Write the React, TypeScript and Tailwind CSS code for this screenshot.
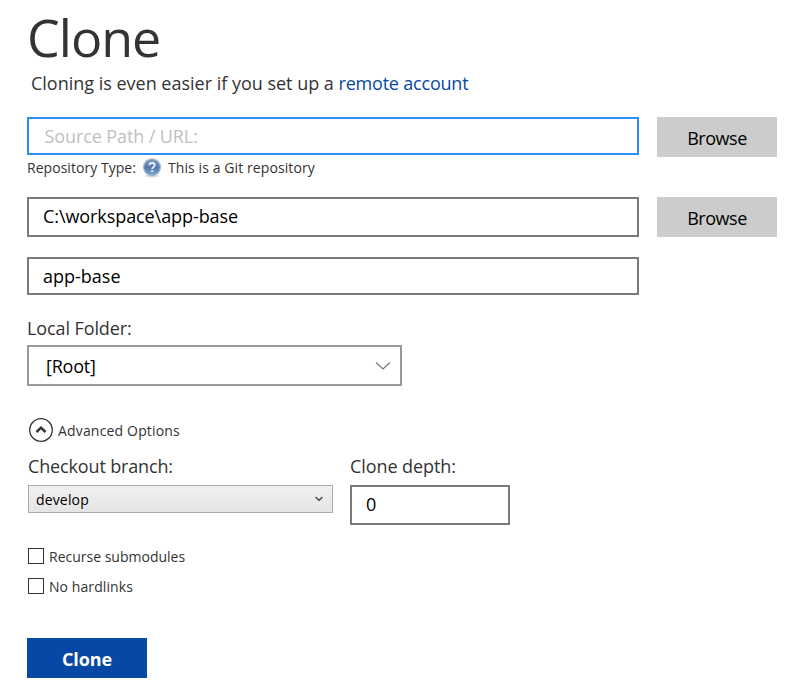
import React from "react";

type FieldProps = { className: string; children: React.ReactNode };

function Field({ className, children }: FieldProps) {
  return (
    <div className={`flex w-[612px] items-center border-2 text-[18px] ${className}`}>
      {children}
    </div>
  );
}

function BrowseButton() {
  return (
    <button className="flex h-10 w-[120px] items-center justify-center bg-[#cccccc] pt-0.5 text-[18px] text-black">
      <span className="tracking-[-0.45px]">Browse</span>
    </button>
  );
}

function HelpIcon() {
  return (
    <svg width="20" height="20" viewBox="0 0 20 20">
      <defs>
        <linearGradient id="ball" x1="0" y1="0" x2="0" y2="1">
          <stop offset="0" stopColor="#86a3c8" />
          <stop offset="0.5" stopColor="#4f78ab" />
          <stop offset="1" stopColor="#7fabd9" />
        </linearGradient>
      </defs>
      <ellipse cx="10" cy="18" rx="7" ry="1.4" fill="#d9d9d9" />
      <circle cx="10" cy="9.2" r="8.400" fill="url(#ball)" stroke="#a9b6c8" strokeWidth="1.200" />
      <path d="M7.400 7.3C7.500 5.700 8.500 5 10 5c1.600 0 2.700.9 2.700 2.200 0 1.900-2.500 2-2.500 3.900" fill="none" stroke="#eef3f9" strokeWidth="1.800" />
      <rect x="9.200" y="12.200" width="2" height="1.900" fill="#eef3f9" />
    </svg>
  );
}

function CheckRow({ children }: { children: React.ReactNode }) {
  return (
    <label className="ml-px flex h-4 items-center">
      <span className="h-4 w-4 border border-[#333333] bg-white" />
      <span className="ml-[5px] mt-px text-[14px] leading-5">{children}</span>
    </label>
  );
}

export default function App() {
  return (
    <main className="h-[691px] w-[786px] overflow-hidden bg-white pl-[27px] pt-[7px] font-['Open_Sans','Noto_Sans',sans-serif] text-[#333333]">
      <h1 className="h-[60px] text-[52px] leading-[60px]">
        <span className="tracking-[-1px]">Clone</span>
      </h1>
      <p className="ml-1 mt-1 h-6 whitespace-nowrap text-[18px] leading-6">
        <span className="tracking-[-0.01px]">Cloning is even easier if you set up a </span>
        <a className="tracking-[-0.2px] text-[#0747a6]">remote account</a>
      </p>

      <div className="mt-[22px] flex h-[38px] gap-[18px]">
        <Field className="h-[38px] border-[#2a8ff7] pl-[15.500px] text-[#bfbfbf]">
          <span className="tracking-[-0.1px]">Source Path / URL:</span>
        </Field>
        <BrowseButton />
      </div>
      <div className="mt-[3px] flex h-5 items-center text-[14px] leading-5">
        <span className="w-[109px] tracking-[0.04px]">Repository Type:</span>
        <span className="ml-[6px]"><HelpIcon /></span>
        <span className="ml-[6px] tracking-[0.09px]">This is a Git repository</span>
      </div>

      <div className="mt-[19px] flex h-10 gap-[18px]">
        <Field className="h-10 border-[#7a7a7a] pb-0.5 pl-[14px] text-black">
          <span className="tracking-[-0.08px]">C:\workspace\app-base</span>
        </Field>
        <BrowseButton />
      </div>
      <div className="mt-5">
        <Field className="h-[38px] border-[#7a7a7a] pl-[14px] text-black">
          <span>app-base</span>
        </Field>
      </div>

      <div className="mt-[21px] h-6 text-[18px] leading-6">
        <span className="tracking-[-0.1px]">Local Folder:</span>
      </div>
      <div className="mt-[5px] flex h-[41px] w-[375px] items-center justify-between border-2 border-[#999999] pl-[17px] pr-[9px] text-[18px] text-black">
        <span className="pt-px tracking-[-0.2px]">[Root]</span>
        <svg width="16" height="10" viewBox="0 0 16 10">
          <path d="M1 1.500 8 8 15 1.500" fill="none" stroke="#777777" strokeWidth="1.200" />
        </svg>
      </div>

      <div className="ml-0.5 mt-8 flex h-6 items-center">
        <svg width="24" height="24" viewBox="0 0 24 24">
          <circle cx="12" cy="12" r="11.300" fill="none" stroke="#333333" strokeWidth="1.300" />
          <path d="M7.500 14 12 9.700 16.500 14" fill="none" stroke="#333333" strokeWidth="2.500" />
        </svg>
        <span className="ml-[5px] mt-px text-[14px] leading-5 tracking-[0.17px]">Advanced Options</span>
      </div>

      <div className="ml-px mt-3 flex gap-[17px]">
        <div className="w-[305px]">
          <div className="h-6 text-[18px] leading-6">
            <span className="tracking-[-0.15px]">Checkout branch:</span>
          </div>
          <div className="mt-[7px] flex h-7 items-center justify-between border border-[#acacac] bg-linear-to-b from-[#f0f0f0] to-[#e5e5e5] pl-[7px] pr-[9px] text-[14px] text-black">
            <span className="tracking-[0.15px]">develop</span>
            <svg width="8" height="6" viewBox="0 0 8 6">
              <path d="M0.600 1 4 4.400 7.400 1" fill="none" stroke="#555555" strokeWidth="1.600" />
            </svg>
          </div>
        </div>
        <div className="w-40">
          <div className="h-6 text-[18px] leading-6">
            <span className="tracking-[-0.08px]">Clone depth:</span>
          </div>
          <div className="mt-[7px] flex h-10 items-center border-2 border-[#7a7a7a] pb-0.5 pl-[14px] text-[18px] text-black">0</div>
        </div>
      </div>

      <div className="mt-[23px] flex flex-col gap-[14px]">
        <CheckRow>Recurse submodules</CheckRow>
        <CheckRow><span className="tracking-[0.08px]">No hardlinks</span></CheckRow>
      </div>

      <button className="mt-11 flex h-10 w-[120px] items-center justify-center bg-[#0747a6] pt-0.5 text-[18px] font-bold text-white">
        <span className="tracking-[-0.1px]">Clone</span>
      </button>
    </main>
  );
}
